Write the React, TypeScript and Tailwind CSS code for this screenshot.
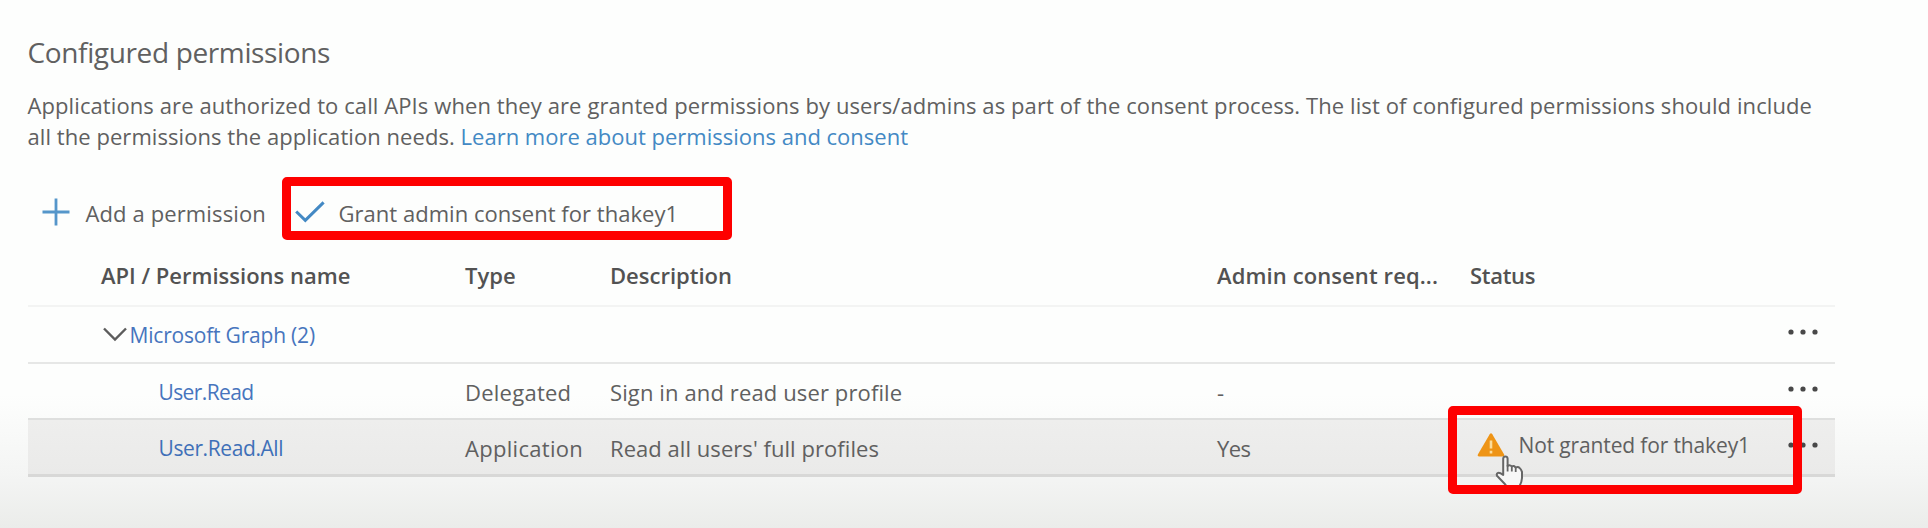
import React from "react";

function PlusIcon() {
  return (
    <svg className="h-7 w-7 shrink-0" viewBox="0 0 28 28" fill="none" stroke="#5596ca" strokeWidth="2.8">
      <path d="M14 0.5V27.5M0.5 14H27.5" />
    </svg>
  );
}

function CheckIcon() {
  return (
    <svg className="h-[22px] w-[30px] shrink-0" viewBox="0 0 30 22" fill="none" stroke="#4389c4" strokeWidth="3">
      <path d="M1.2 10.5L10.3 19.3L28.6 1.4" />
    </svg>
  );
}

function ChevronIcon() {
  return (
    <svg className="h-[15px] w-6 shrink-0" viewBox="0 0 24 15" fill="none" stroke="#5c5c5c" strokeWidth="2.4">
      <path d="M1 1.5L12 12.5L23 1.5" />
    </svg>
  );
}

function WarningIcon() {
  return (
    <svg className="h-6 w-7 shrink-0" viewBox="0 0 28 24">
      <path d="M12.7 1.2Q14 -0.6 15.3 1.2L27 21.2Q27.8 23.4 25.6 23.5H2.4Q0.2 23.4 1 21.2Z" fill="#ee9416" />
      <path d="M14 7.5V15.5M14 17.8V20.4" stroke="#fbdc9c" strokeWidth="2.6" />
    </svg>
  );
}

function MoreIcon() {
  return (
    <svg className="h-1.5 w-[30px] shrink-0" viewBox="0 0 30 6" fill="#484848">
      <circle cx="3" cy="3" r="2.6" />
      <circle cx="15" cy="3" r="2.6" />
      <circle cx="27" cy="3" r="2.6" />
    </svg>
  );
}

function HandCursor() {
  return (
    <svg className="absolute left-[1495px] top-[455px] h-[32px] w-[29px]" viewBox="0 0 29 32">
      <path
        d="M8.2 20V3.6Q8.4 1.4 10.4 1.4Q12.4 1.4 12.6 3.6V11Q14.6 9.2 16.8 11.4Q19 10 20.6 12.6Q23 11.2 24.6 13Q26 14 27 16.8V23Q26.8 27 24.6 31H11.5Q9.5 28.5 6.5 25.5L2 20.8Q1.2 18.8 3 17.9Q4.8 17.5 8.2 20Z"
        fill="#f7f7f7"
        stroke="#666666"
        strokeWidth="2"
        strokeLinejoin="round"
      />
      <path d="M12.6 10V16.5M16.8 11.5V16.5M20.7 12.5V17" stroke="#666666" strokeWidth="1.8" />
    </svg>
  );
}

const grid = "grid grid-cols-[437.5px_145px_607px_253px_317.5px_47px] w-[1807px]";

export default function App() {
  return (
    <main className="relative flex h-[528px] w-[1928px] flex-col overflow-hidden whitespace-nowrap bg-[linear-gradient(to_bottom,#fdfefd_0px,#fdfefd_395px,#f4f5f4_475px,#ebecea_528px)] pl-[27.5px] pt-8 font-['Open_Sans','Noto_Sans',sans-serif] text-[22px] leading-[30px] text-[#606060]">
      <h1 className="h-10 text-[28px] leading-10 tracking-[-0.36px]">Configured permissions</h1>
      <p className="mt-[18px] leading-[31px]">
        <span className="tracking-[0.095px]">
          Applications are authorized to call APIs when they are granted permissions by users/admins as part of the
          consent process. The list of configured permissions should include
        </span>
        <br />
        <span className="tracking-[0.06px]">all the permissions the application needs. </span>
        <a className="text-[#4389c4]">Learn more about permissions and consent</a>
      </p>

      <div className="mt-[25px] flex h-[63px] items-center">
        <button className="flex items-center pl-[14px]">
          <span className="pt-1.5"><PlusIcon /></span>
          <span className="ml-4 mt-2 w-[209px] text-left tracking-[0.12px]">Add a permission</span>
        </button>
        <button className="flex items-center">
          <span className="pt-1.5"><CheckIcon /></span>
          <span className="ml-[14px] mt-2 tracking-[0.03px]">Grant admin consent for thakey1</span>
        </button>
      </div>

      <section>
        <div className={`${grid} h-[67px] border-b-2 border-[#f3f4f3] pt-5 font-semibold text-[#525252]`}>
          <span className="pl-[73.5px]">API / Permissions name</span>
          <span>Type</span>
          <span>Description</span>
          <span className="tracking-[0.1px]">Admin consent req...</span>
          <span className="tracking-[-0.3px]">Status</span>
        </div>
        <div className={`${grid} h-[57px] border-b-2 border-[#e6e7e6]`}>
          <div className="flex items-center pl-[75px]">
            <ChevronIcon />
            <a className="ml-[3px] text-[21px] tracking-[-0.2px] text-[#4775bd]">Microsoft Graph (2)</a>
          </div>
          <span className="col-start-6 pt-[22px]"><MoreIcon /></span>
        </div>
        <div className={`${grid} h-14 border-b-2 border-[#dedfde]`}>
          <a className="pl-[131px] pt-[13px] text-[21px] tracking-[-0.6px] text-[#4775bd]">User.Read</a>
          <span className="pt-[13px] tracking-[0.25px]">Delegated</span>
          <span className="pt-[13px] tracking-[0.12px]">Sign in and read user profile</span>
          <span className="pt-[13px]">-</span>
          <span className="col-start-6 pt-[22px]"><MoreIcon /></span>
        </div>
        <div className={`${grid} h-[57px] border-b-[3px] border-[#d8d8d7] bg-[linear-gradient(to_bottom,#eeeeed,#eaeae9)]`}>
          <a className="pl-[131px] pt-[13px] text-[21px] tracking-[-0.4px] text-[#3f70b8]">User.Read.All</a>
          <span className="pt-[13px] tracking-[0.3px]">Application</span>
          <span className="pt-[13px] tracking-[0.05px]">Read all users' full profiles</span>
          <span className="pt-[13px] tracking-[-0.6px]">Yes</span>
          <div className="flex items-start pl-[6.5px] pt-2.5">
            <span className="pt-[3px]"><WarningIcon /></span>
            <span className="ml-[14px] text-[21px] tracking-[-0.14px]">Not granted for thakey1</span>
          </div>
          <span className="pt-[22px]"><MoreIcon /></span>
        </div>
      </section>

      <HandCursor />
      <div className="absolute left-[282px] top-[177px] h-[63px] w-[450px] rounded-[5px] border-[9px] border-[#fe0000]" />
      <div className="absolute left-[1448px] top-[406px] h-[88px] w-[354px] rounded-[5px] border-[9px] border-[#fe0000]" />
    </main>
  );
}
